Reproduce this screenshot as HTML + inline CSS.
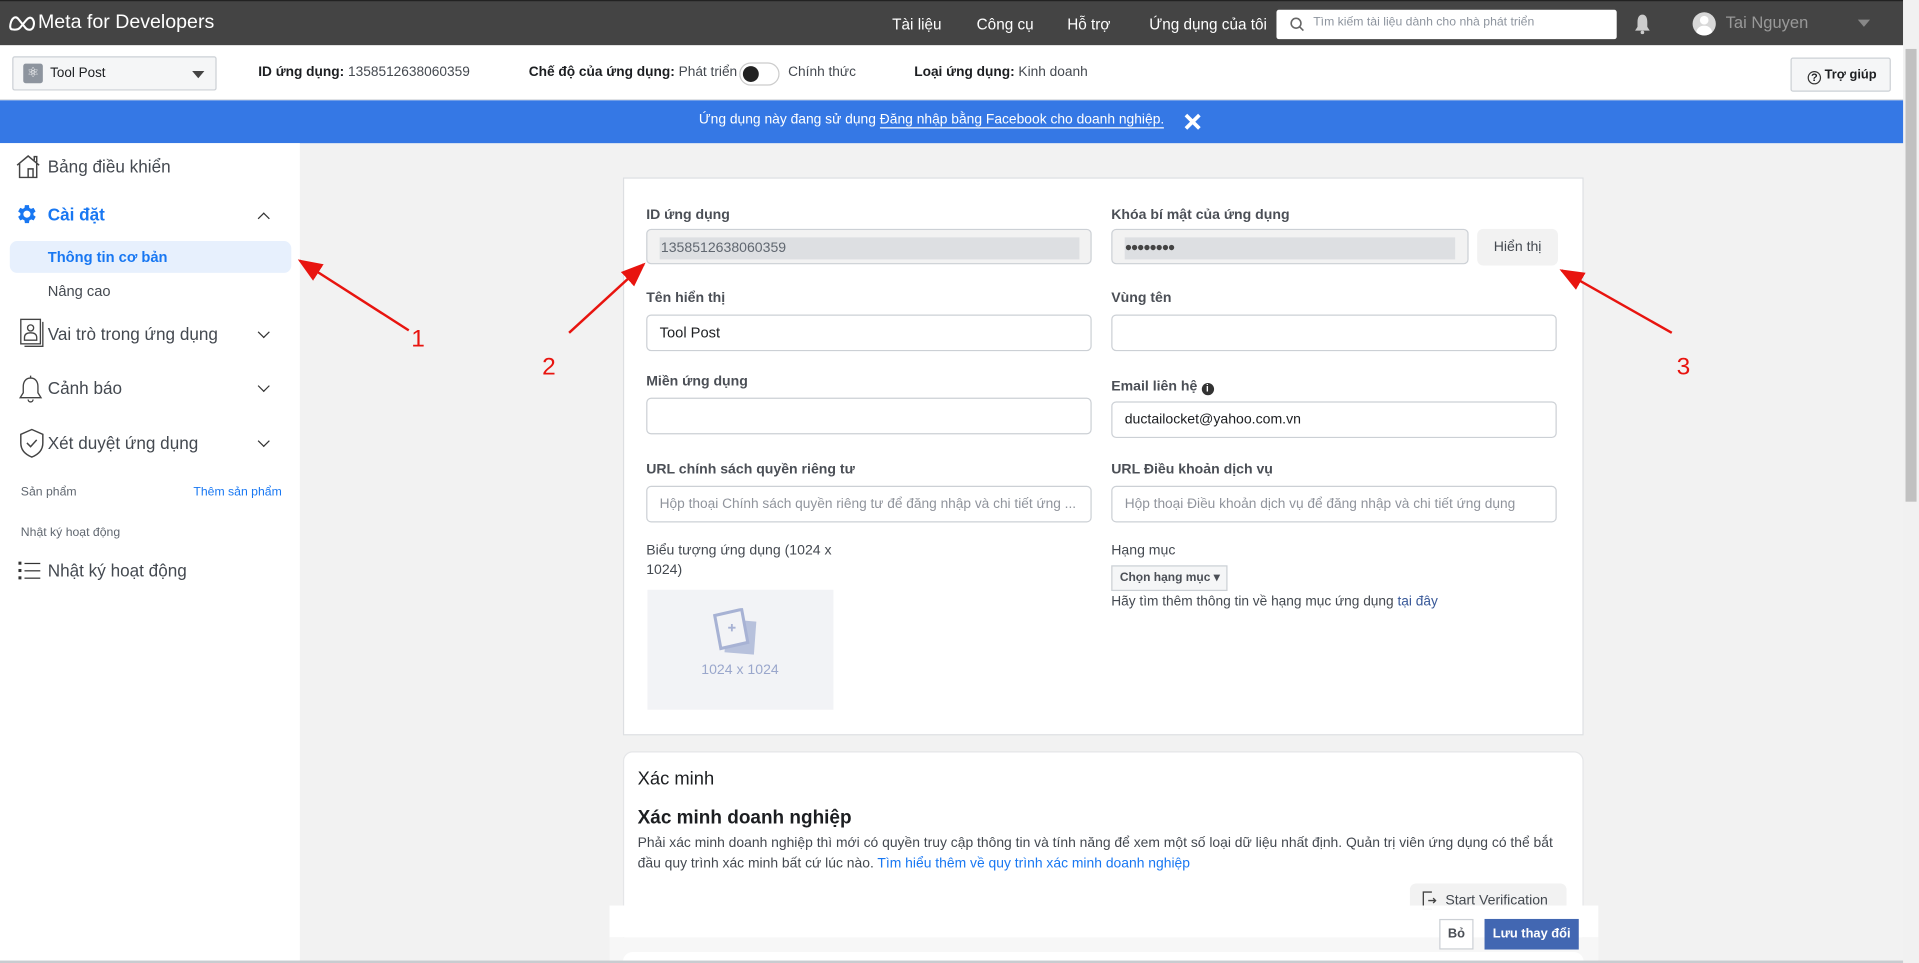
<!DOCTYPE html>
<html><head><meta charset="utf-8"><style>
html,body{margin:0;padding:0;width:1919px;height:963px;overflow:hidden;background:#f2f2f2}
#w{position:absolute;left:0;top:0;width:1568px;height:787px;transform:scale(1.22385,1.22363);transform-origin:0 0;font-family:"Liberation Sans",Arial,sans-serif;color:#1c1e21;background:#f2f2f2;overflow:hidden}
.a{position:absolute;white-space:nowrap}
.top{position:absolute;left:0;top:0;width:1555px;height:37px;background:#444;border-top:1px solid #222;box-sizing:border-box}
.nav{color:#fff;font-size:12.5px;top:12px}
.bar{position:absolute;left:0;top:37px;width:1555px;height:45px;background:#fff}
.banner{position:absolute;left:0;top:82px;width:1555px;height:35px;background:#3578e5}
.side{position:absolute;left:0;top:117px;width:245px;height:670px;background:#fff}
.card{position:absolute;background:#fff;border:1px solid #dddfe2;box-sizing:border-box}
.lbl{font-size:11.5px;font-weight:bold;color:#4b4f56}
.inp{position:absolute;border:1px solid #ccd0d5;border-radius:4px;background:#fff;box-sizing:border-box;font-size:12px;color:#1c1e21;padding:0 10px;line-height:28px;white-space:nowrap;overflow:hidden}
.ph{color:#90949c;font-size:11.2px}
.si{font-size:14px;color:#444950}
.chev{position:absolute;width:6px;height:6px;border-right:1.6px solid #333;border-bottom:1.6px solid #333;transform:rotate(45deg)}
.up{transform:rotate(-135deg)}
</style></head><body><div id="w">
<div class="top">
 <svg class="a" style="left:7px;top:11px" width="22" height="14" viewBox="0 0 22 14"><path d="M3 12C1 12 1 9 2 6 3.5 2 6 1 8 3.5L14 11C16 13 19.5 13 20.5 9 21.5 5 19 1 16 3 14 4.5 11 9 9 11 7 13 4 12 3 12Z" fill="none" stroke="#fff" stroke-width="1.7"/></svg>
 <div class="a" style="left:31px;top:9px;color:#fff;font-size:16px">Meta for Developers</div>
 <div class="a nav" style="left:729px">Tài liệu</div>
 <div class="a nav" style="left:798px">Công cụ</div>
 <div class="a nav" style="left:872px">Hỗ trợ</div>
 <div class="a nav" style="left:939px">Ứng dụng của tôi</div>
 <div class="a" style="left:1043px;top:7px;width:278px;height:24px;background:#fff;border-radius:2px"></div>
 <svg class="a" style="left:1054px;top:13px" width="12" height="12"><circle cx="5" cy="5" r="4" fill="none" stroke="#666" stroke-width="1.3"/><path d="M8 8l3 3" stroke="#666" stroke-width="1.3"/></svg>
 <div class="a" style="left:1073px;top:12px;font-size:10px;color:#8d949e">Tìm kiếm tài liệu dành cho nhà phát triển</div>
 <svg class="a" style="left:1335px;top:10px" width="14" height="17"><path d="M7 1C4 1 3 4 3 7V11L1 14H13L11 11V7C11 4 10 1 7 1Z" fill="#ccc"/><circle cx="7" cy="15.5" r="1.5" fill="#ccc"/></svg>
 <div class="a" style="left:1383px;top:9px;width:19px;height:19px;border-radius:50%;background:#d8d8d8;overflow:hidden"><div class="a" style="left:6px;top:3px;width:7px;height:7px;border-radius:50%;background:#fff"></div><div class="a" style="left:3px;top:11px;width:13px;height:10px;border-radius:6px 6px 0 0;background:#fff"></div></div>
 <div class="a" style="left:1410px;top:10px;font-size:13.5px;color:#999">Tai Nguyen</div>
 <div class="a" style="left:1518px;top:15px;border-left:5px solid transparent;border-right:5px solid transparent;border-top:6px solid #888;width:0;height:0"></div>
</div>
<div class="a" style="left:1555px;top:0;width:13px;height:787px;background:#f1f1f1"></div>
<div class="a" style="left:1557px;top:40px;width:9px;height:370px;background:#c1c1c1"></div>
<div class="bar">
 <div class="a" style="left:10px;top:9px;width:167px;height:28px;background:#f5f6f7;border:1px solid #ccd0d5;box-sizing:border-box;border-radius:2px"></div>
 <div class="a" style="left:19px;top:15px;width:16px;height:16px;background:#8d949e;border-radius:2px;color:#fff;font-size:11px;text-align:center;line-height:16px">⚛</div>
 <div class="a" style="left:41px;top:17px;font-size:11px">Tool Post</div>
 <div class="a" style="left:157px;top:21px;border-left:5px solid transparent;border-right:5px solid transparent;border-top:6px solid #444;width:0;height:0"></div>
 <div class="a" style="left:211px;top:16px;font-size:11.2px;color:#444950"><b style="color:#1c1e21">ID ứng dụng:</b> 1358512638060359</div>
 <div class="a" style="left:432px;top:16px;font-size:11.2px;color:#444950"><b style="color:#1c1e21">Chế độ của ứng dụng:</b> Phát triển</div>
 <div class="a" style="left:604px;top:14px;width:33px;height:19px;border:1px solid #ccc;border-radius:10px;box-sizing:border-box;background:#fff"><div class="a" style="left:2px;top:2px;width:13px;height:13px;border-radius:50%;background:#222"></div></div>
 <div class="a" style="left:644px;top:16px;font-size:11.2px;color:#444950">Chính thức</div>
 <div class="a" style="left:747px;top:16px;font-size:11.2px;color:#444950"><b style="color:#1c1e21">Loại ứng dụng:</b> Kinh doanh</div>
 <div class="a" style="left:1463px;top:10px;width:82px;height:28px;background:#f5f6f7;border:1px solid #ccd0d5;box-sizing:border-box;border-radius:2px;font-size:10.5px;font-weight:bold;line-height:26px;padding-left:13px">
 <span style="display:inline-block;width:11px;height:11px;border:1.3px solid #333;border-radius:50%;font-size:9px;line-height:9px;text-align:center;vertical-align:-2px;box-sizing:border-box">?</span> Trợ giúp</div>
 <div class="a" style="left:0;top:44px;width:1555px;height:1px;background:#dddfe2"></div>
</div>
<div class="banner">
 <div class="a" style="left:571px;top:10px;color:#fff;font-size:11.3px">Ứng dụng này đang sử dụng <span style="border-bottom:1.5px solid #fff">Đăng nhập bằng Facebook cho doanh nghiệp.</span></div>
 <svg class="a" style="left:967px;top:10px" width="15" height="15"><path d="M2 2L13 13M13 2L2 13" stroke="#fff" stroke-width="3"/></svg>
</div>
<div class="side">
 <svg class="a" style="left:13px;top:9px" width="20" height="20" viewBox="0 0 20 20" fill="none" stroke="#444" stroke-width="1.2"><path d="M1 9L10 1.5 19 9M3 7.5V19H17V7.5M10 19V12H14V19M15 5V2H17V6.7"/></svg>
 <div class="a si" style="left:39px;top:11px">Bảng điều khiển</div>
 <svg class="a" style="left:12px;top:48px" width="20" height="20" viewBox="0 0 24 24"><path fill="#1877f2" d="M19.4 13a7.5 7.5 0 000-2l2.1-1.6-2-3.5-2.5 1a7.7 7.7 0 00-1.7-1L15 3.2h-4l-.4 2.7a7.7 7.7 0 00-1.7 1l-2.5-1-2 3.5L6.6 11a7.5 7.5 0 000 2l-2.2 1.6 2 3.5 2.5-1a7.7 7.7 0 001.7 1l.4 2.7h4l.4-2.7a7.7 7.7 0 001.7-1l2.5 1 2-3.5zM13 15.5a3.5 3.5 0 110-7 3.5 3.5 0 010 7z" transform="translate(-1 0)"/></svg>
 <div class="a" style="left:39px;top:50px;font-size:14px;font-weight:bold;color:#1877f2">Cài đặt</div>
 <div class="chev up" style="left:212px;top:58px"></div>
 <div class="a" style="left:8px;top:80px;width:230px;height:26px;background:#e7f0fd;border-radius:6px"></div>
 <div class="a" style="left:39px;top:86px;font-size:12px;font-weight:bold;color:#1877f2">Thông tin cơ bản</div>
 <div class="a" style="left:39px;top:114px;font-size:12px;color:#444950">Nâng cao</div>
 <svg class="a" style="left:16px;top:143px" width="22" height="24" viewBox="0 0 22 24" fill="none" stroke="#444" stroke-width="1.1"><rect x="1" y="1" width="16" height="20"/><path d="M19 3V23H4"/><circle cx="9" cy="8" r="2.5"/><path d="M4 16c0-3 2-4 5-4s5 1 5 4v2H4z"/></svg>
 <div class="a si" style="left:39px;top:148px">Vai trò trong ứng dụng</div>
 <div class="chev" style="left:212px;top:151px"></div>
 <svg class="a" style="left:15px;top:189px" width="20" height="24" viewBox="0 0 20 24" fill="none" stroke="#444" stroke-width="1.1"><path d="M10 3C6 3 4 6 4 10V15L1.5 19H18.5L16 15V10C16 6 14 3 10 3Z"/><path d="M8 20.5a2 2 0 004 0M10 1v2"/></svg>
 <div class="a si" style="left:39px;top:192px">Cảnh báo</div>
 <div class="chev" style="left:212px;top:195px"></div>
 <svg class="a" style="left:15px;top:233px" width="22" height="25" viewBox="0 0 22 25" fill="none" stroke="#444" stroke-width="1.2"><path d="M11 1L20 5V12C20 18 16 21.5 11 23.5 6 21.5 2 18 2 12V5Z"/><path d="M7 12L10 15 15 9.5"/></svg>
 <div class="a si" style="left:39px;top:237px">Xét duyệt ứng dụng</div>
 <div class="chev" style="left:212px;top:240px"></div>
 <div class="a" style="left:17px;top:280px;font-size:10px;color:#606770">Sản phẩm</div>
 <div class="a" style="left:158px;top:280px;font-size:10px;color:#1877f2">Thêm sản phẩm</div>
 <div class="a" style="left:17px;top:313px;font-size:10px;color:#606770">Nhật ký hoạt động</div>
 <svg class="a" style="left:15px;top:341px" width="18" height="16" fill="#333"><rect x="0" y="1" width="2.5" height="2.5"/><rect x="0" y="7" width="2.5" height="2.5"/><rect x="0" y="13" width="2.5" height="2.5"/><rect x="5" y="2" width="13" height="1"/><rect x="5" y="8" width="13" height="1"/><rect x="5" y="14" width="13" height="1"/></svg>
 <div class="a si" style="left:39px;top:341px">Nhật ký hoạt động</div>
</div>
<div class="card" style="left:509px;top:145px;width:785px;height:456px"></div>
<div class="a lbl" style="left:528px;top:170px">ID ứng dụng</div>
<div class="inp" style="left:528px;top:187px;width:364px;height:29px;background:#f2f2f2;padding:6px 10px 0"><div style="background:#dddfe2;height:18px;line-height:18px;padding-left:1px;color:#606770;width:342px;font-size:11.5px">1358512638060359</div></div>
<div class="a lbl" style="left:908px;top:170px">Khóa bí mật của ứng dụng</div>
<div class="inp" style="left:908px;top:187px;width:292px;height:29px;background:#f2f2f2;padding:6px 10px 0"><div style="background:#dddfe2;height:18px;line-height:18px;font-size:10px;color:#444;letter-spacing:-1px;width:270px">●●●●●●●●</div></div>
<div class="a" style="left:1207px;top:187px;width:66px;height:30px;background:#f2f2f2;border-radius:5px;font-size:11.5px;color:#444950;text-align:center;line-height:30px">Hiển thị</div>
<div class="a lbl" style="left:528px;top:238px">Tên hiển thị</div>
<div class="inp" style="left:528px;top:257px;width:364px;height:30px">Tool Post</div>
<div class="a lbl" style="left:908px;top:238px">Vùng tên</div>
<div class="inp" style="left:908px;top:257px;width:364px;height:30px"></div>
<div class="a lbl" style="left:528px;top:306px">Miền ứng dụng</div>
<div class="inp" style="left:528px;top:325px;width:364px;height:30px"></div>
<div class="a lbl" style="left:908px;top:310px">Email liên hệ <span style="display:inline-block;width:10px;height:10px;border-radius:50%;background:#333;color:#fff;font-size:8px;line-height:10px;text-align:center;vertical-align:-1px">i</span></div>
<div class="inp" style="left:908px;top:328px;width:364px;height:30px;font-size:11.5px">ductailocket@yahoo.com.vn</div>
<div class="a lbl" style="left:528px;top:378px">URL chính sách quyền riêng tư</div>
<div class="inp ph" style="left:528px;top:397px;width:364px;height:30px">Hộp thoại Chính sách quyền riêng tư để đăng nhập và chi tiết ứng ...</div>
<div class="a lbl" style="left:908px;top:378px">URL Điều khoản dịch vụ</div>
<div class="inp ph" style="left:908px;top:397px;width:364px;height:30px">Hộp thoại Điều khoản dịch vụ để đăng nhập và chi tiết ứng dụng</div>
<div class="a" style="left:528px;top:443px;font-size:11.5px;color:#444950;line-height:15.5px">Biểu tượng ứng dụng (1024 x<br>1024)</div>
<div class="a" style="left:529px;top:482px;width:152px;height:98px;background:#f2f3f6"></div>
<svg class="a" style="left:582px;top:497px" width="46" height="40" viewBox="0 0 46 40"><path d="M12 9L36 11 34 38 10 36Z" fill="#b7c1dc"/><path d="M2 6L24 1 29 28 7 33Z" fill="#f2f3f6" stroke="#a7b2d4" stroke-width="2.5"/><path d="M13 16H19M16 13V19" stroke="#a7b2d4" stroke-width="1.5"/></svg>
<div class="a" style="left:573px;top:542px;font-size:11.5px;color:#9aa7cc">1024 x 1024</div>
<div class="a" style="left:908px;top:444px;font-size:11.5px;color:#444950">Hạng mục</div>
<div class="a" style="left:908px;top:462px;width:95px;height:21px;background:#f5f6f7;border:1px solid #ccd0d5;box-sizing:border-box;font-size:9.8px;font-weight:bold;color:#4b4f56;line-height:19px;padding-left:6px">Chọn hạng mục ▾</div>
<div class="a" style="left:908px;top:486px;font-size:11.2px;color:#444950">Hãy tìm thêm thông tin về hạng mục ứng dụng <span style="color:#385898">tại đây</span></div>
<div class="card" style="left:509px;top:614px;width:785px;height:200px;border-radius:8px;border-color:#e5e6e8"></div>
<div class="a" style="left:521px;top:628px;font-size:15px;color:#1c1e21">Xác minh</div>
<div class="a" style="left:521px;top:660px;font-size:15.5px;font-weight:bold;color:#1c1e21">Xác minh doanh nghiệp</div>
<div class="a" style="left:521px;top:681px;font-size:11.35px;color:#444950;line-height:16.5px">Phải xác minh doanh nghiệp thì mới có quyền truy cập thông tin và tính năng để xem một số loại dữ liệu nhất định. Quản trị viên ứng dụng có thể bắt<br>đầu quy trình xác minh bất cứ lúc nào. <span style="color:#1877f2">Tìm hiểu thêm về quy trình xác minh doanh nghiệp</span></div>
<div class="a" style="left:1152px;top:722px;width:128px;height:30px;background:#f2f2f2;border-radius:5px;font-size:11.5px;color:#444950;line-height:28px;padding-left:29px;box-sizing:border-box">Start Verification</div>
<svg class="a" style="left:1162px;top:728px" width="12" height="16" fill="none" stroke="#444" stroke-width="1.1"><path d="M8 1H1V15H8M5 8H11M9 6L11 8 9 10"/></svg>
<div class="a" style="left:498px;top:740px;width:808px;height:26px;background:#fff;opacity:.97"></div>
<div class="a" style="left:498px;top:766px;width:808px;height:30px;background:#f7f7f7"></div>
<div class="a" style="left:509px;top:778px;width:785px;height:10px;background:#fff;border-radius:8px 8px 0 0"></div>
<div class="a" style="left:1176px;top:751px;width:28px;height:25px;background:#fff;border:1px solid #ccd0d5;box-sizing:border-box;font-size:10.5px;font-weight:bold;color:#4b4f56;text-align:center;line-height:23px">Bỏ</div>
<div class="a" style="left:1213px;top:751px;width:77px;height:25px;background:#4267b2;font-size:10.5px;font-weight:bold;color:#fff;text-align:center;line-height:25px">Lưu thay đổi</div>
<div class="a" style="left:0;top:785px;width:1555px;height:2px;background:#c8ccd0"></div>
<svg class="a" style="left:0;top:0" width="1568" height="787">
<defs><marker id="m" markerWidth="10" markerHeight="8" refX="9" refY="4" orient="auto"><path d="M0 0L10 4 0 8Z" fill="#e8140f"/></marker></defs>
<g stroke="#e8140f" stroke-width="2" marker-end="url(#m)"><line x1="334" y1="270" x2="245" y2="213"/><line x1="465" y1="272" x2="526" y2="216"/><line x1="1366" y1="272" x2="1276" y2="221"/></g>
<g fill="#e8140f" font-family="Liberation Sans,sans-serif" font-size="20"><text x="336" y="283">1</text><text x="443" y="306">2</text><text x="1370" y="306">3</text></g>
</svg>
</div></body></html>
